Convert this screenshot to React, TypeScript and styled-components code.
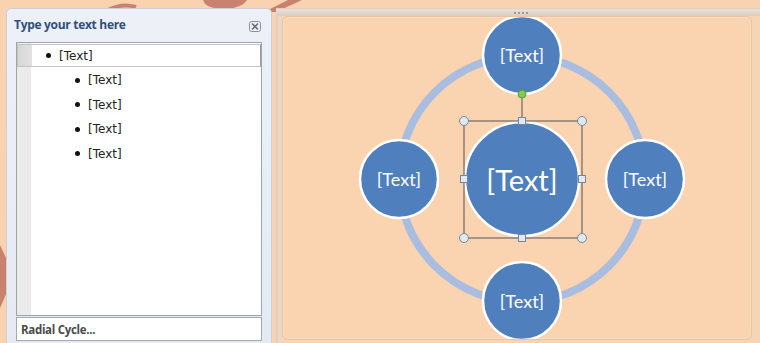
import React from "react";
import styled, { createGlobalStyle } from "styled-components";

const Global = createGlobalStyle`
  html, body { margin: 0; padding: 0; }
  body {
    background: #f9d2b0;
    width: 760px;
    height: 343px;
    overflow: hidden;
    font-family: "Noto Sans", "Open Sans", sans-serif;
  }
`;

const Stage = styled.div`
  position: relative;
  width: 760px;
  height: 343px;
  overflow: hidden;
`;

const Backdrop = styled.svg`
  position: absolute;
  left: 0;
  top: 0;
  z-index: 0;
`;

const Layout = styled.div`
  position: relative;
  z-index: 1;
  display: flex;
  gap: 4px;
  padding: 8px 0 0 6px;
  height: 335px;
`;

const Pane = styled.div`
  width: 266px;
  height: 340px;
  box-sizing: border-box;
  background: linear-gradient(#edf1f7, #e5eaf2);
  border: 1px solid #c9d0da;
  border-radius: 5px 5px 0 0;
  display: flex;
  flex-direction: column;
  padding: 0 9px 0 9px;
`;

const PaneHeader = styled.div`
  display: flex;
  align-items: center;
  justify-content: space-between;
  height: 33px;
`;

const PaneTitle = styled.div`
  font-family: "Open Sans", "Noto Sans", sans-serif;
  font-weight: 700;
  font-size: 12px;
  letter-spacing: -0.3px;
  color: #2f4f7f;
  margin-left: -2px;
  margin-top: -3px;
`;

const CloseBox = styled.svg`
  margin-right: 1px;
  margin-top: 2px;
`;

const Editor = styled.div`
  height: 274px;
  box-sizing: border-box;
  background: #ffffff;
  border: 1px solid #9ea4ab;
  display: flex;
`;

const Gutter = styled.div`
  width: 14px;
  background: #ebebeb;
  flex: none;
`;

const Lines = styled.div`
  flex: 1;
  display: flex;
  flex-direction: column;
  padding-top: 1px;
`;

const Line = styled.div<{ $level: number; $active?: boolean }>`
  height: 24.5px;
  display: flex;
  align-items: center;
  box-sizing: border-box;
  padding-left: ${(p) => (p.$level === 0 ? 14 : 44)}px;
  font-family: "DejaVu Sans", "Noto Sans", sans-serif;
  font-size: 12px;
  color: #222;
  ${(p) =>
    p.$active
      ? `margin-left: -14px; padding-left: 28px; height: 23px; border: 1px solid #c4c4c4; border-right-color: #9c9c9c; background: linear-gradient(90deg, #d6d6d6 0px, #e2e2e2 14px, #fff 14px, #fff 100%); margin-bottom: 1px;`
      : ""}
`;

const Dot = styled.span`
  width: 5px;
  height: 5px;
  border-radius: 50%;
  background: #111;
  margin-right: 8px;
  flex: none;
`;

const LayoutName = styled.div`
  margin-top: 1px;
  height: 24px;
  box-sizing: border-box;
  background: #fff;
  border: 1px solid #a3a9b0;
  display: flex;
  align-items: center;
  padding-left: 4px;
  font-family: "Open Sans", "Noto Sans", sans-serif;
  font-weight: 700;
  font-size: 11.5px;
  letter-spacing: -0.3px;
  color: #4a4a4a;
`;

const Board = styled.div`
  flex: 1;
  display: flex;
  flex-direction: column;
  background: linear-gradient(90deg, #dcc9bd 0px, #ead9cc 3px, #f6d4b6 6px);
`;

const Grip = styled.div`
  height: 8px;
  display: flex;
  justify-content: center;
  align-items: center;
  background: linear-gradient(#e9e0d6, #dccdc0);
  border-top: 1px solid #e0cfc2;
  box-sizing: border-box;
`;

const GripDots = styled.span`
  width: 14px;
  height: 2px;
  background: repeating-linear-gradient(90deg, #a89a90 0 2px, transparent 2px 4px);
  margin-left: 6px;
`;

const Canvas = styled.div`
  margin: 0 8px 3px 6px;
  flex: 1;
  border: 1px solid #e7c4a4;
  border-radius: 6px;
  background: #fad3b0;
  box-shadow: inset 0 0 0 1px #fbdcc0;
  display: flex;
  justify-content: flex-start;
  align-items: flex-start;
`;

const Diagram = styled.svg`
  display: block;
`;

const NodeLabel = styled.text<{ $big?: boolean }>`
  font-family: "Lato", "Open Sans", sans-serif;
  font-size: ${(p) => (p.$big ? 29 : 18)}px;
  fill: #ffffff;
  text-anchor: middle;
  dominant-baseline: central;
`;

const cx = 239;
const cy = 162;

const outer = [
  { x: cx, y: cy - 124 },
  { x: cx - 123, y: cy },
  { x: cx + 123, y: cy },
  { x: cx, y: cy + 122 },
];

export default function App() {
  const box = { x1: cx - 58, y1: cy - 58, x2: cx + 60, y2: cy + 59 };
  const corners = [
    [box.x1, box.y1],
    [box.x2, box.y1],
    [box.x1, box.y2],
    [box.x2, box.y2],
  ];
  const mids = [
    [cx, box.y1],
    [cx, box.y2],
    [box.x1, cy],
    [box.x2, cy],
  ];
  return (
    <Stage>
      <Global />
      <Backdrop width="760" height="343" viewBox="0 0 760 343">
        <path d="M108 10 Q122 3 136 7" stroke="#c98270" strokeWidth="4" fill="none" />
        <path d="M203 0 L247 0 Q242 8 226 9 Q210 9 205 4 Z" fill="#c98270" />
        <path d="M288 0 L302 0 L276 12 L264 12 Z" fill="#c98270" />
        <path d="M0 245 L7 260 L7 292 L0 308 Z" fill="#c98270" />
      </Backdrop>
      <Layout>
        <Pane>
          <PaneHeader>
            <PaneTitle>Type your text here</PaneTitle>
            <CloseBox width="12" height="11" viewBox="0 0 12 11">
              <rect x="0.5" y="0.5" width="11" height="10" rx="2" fill="none" stroke="#8a8f96" />
              <path d="M3 2.5 L9 8.5 M9 2.5 L3 8.5" stroke="#6b7078" strokeWidth="1.6" />
            </CloseBox>
          </PaneHeader>
          <Editor>
            <Gutter />
            <Lines>
              <Line $level={0} $active>
                <Dot />
                [Text]
              </Line>
              <Line $level={1}>
                <Dot />
                [Text]
              </Line>
              <Line $level={1}>
                <Dot />
                [Text]
              </Line>
              <Line $level={1}>
                <Dot />
                [Text]
              </Line>
              <Line $level={1}>
                <Dot />
                [Text]
              </Line>
            </Lines>
          </Editor>
          <LayoutName>Radial Cycle...</LayoutName>
        </Pane>
        <Board>
          <Grip>
            <GripDots />
          </Grip>
          <Canvas>
            <Diagram width="468" height="322" viewBox="0 0 468 322">
              <circle cx={cx} cy={cy} r="123" fill="none" stroke="#a9bde0" strokeWidth="8" />
              <line x1={cx} y1={cy - 85} x2={cx} y2={box.y1} stroke="#555" strokeWidth="1" />
              {outer.map((n, i) => (
                <g key={i}>
                  <circle cx={n.x} cy={n.y} r="39" fill="#4f7fbd" stroke="#ffffff" strokeWidth="2.5" />
                  <NodeLabel x={n.x} y={n.y}>[Text]</NodeLabel>
                </g>
              ))}
              <circle cx={cx} cy={cy} r="57" fill="#4f7fbd" stroke="#ffffff" strokeWidth="2.5" />
              <NodeLabel $big x={cx} y={cy}>[Text]</NodeLabel>
              <rect
                x={box.x1}
                y={box.y1}
                width={box.x2 - box.x1}
                height={box.y2 - box.y1}
                fill="none"
                stroke="#555"
                strokeWidth="1"
              />
              <circle cx={cx} cy={cy - 85} r="4" fill="#7ed04a" stroke="#5a9a30" strokeWidth="1" />
              {corners.map(([x, y], i) => (
                <circle key={i} cx={x} cy={y} r="4.5" fill="#dfe9f5" stroke="#7a8694" strokeWidth="1" />
              ))}
              {mids.map(([x, y], i) => (
                <rect key={i} x={x - 3.5} y={y - 3.5} width="7" height="7" fill="#dfe9f5" stroke="#7a8694" strokeWidth="1" />
              ))}
            </Diagram>
          </Canvas>
        </Board>
      </Layout>
    </Stage>
  );
}
